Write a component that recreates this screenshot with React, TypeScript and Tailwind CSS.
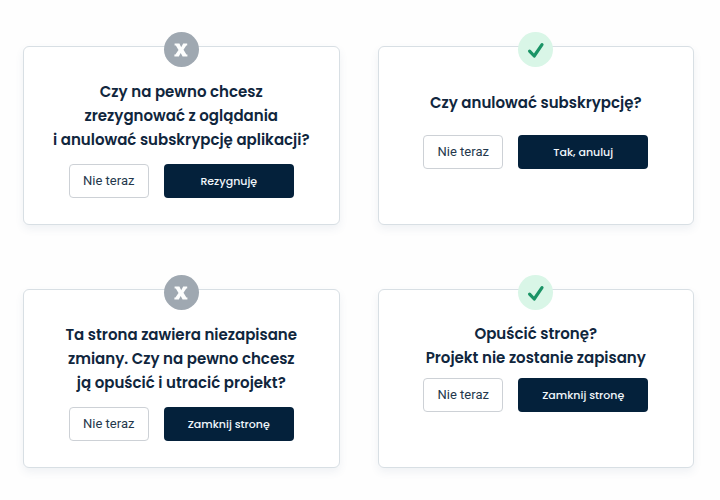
type DialogProps = {
  kind: 'dismiss' | 'confirm';
  lines: string[];
  action: string;
  spacing: string;
};

function StatusIcon({ kind }: { kind: DialogProps['kind'] }) {
  if (kind === 'dismiss') {
    return (
      <span className="flex size-[35px] items-center justify-center rounded-full bg-[#9fa8b1]">
        <svg viewBox="0 0 14 14" className="size-[14px]" fill="#fdfefe" aria-hidden="true">
          <path d="M0.6 0.5H5.4L7.2 4.2L9.2 0.5H13.2V2.6H12.3L9.5 6.8L12.4 11.4H13.4V13.5H8.6L6.7 9.9L4.8 13.5H0.4V11.4H1.4L4.5 7L1.8 2.6H0.6Z" />
        </svg>
      </span>
    );
  }
  return (
    <span className="flex size-[35px] items-center justify-center rounded-full bg-[#d9f6e7]">
      <svg viewBox="0 0 18 18" className="size-[18px]" fill="none" aria-hidden="true">
        <path d="M2.6 10.2L7.2 15L15 3.6" stroke="#1a9466" strokeWidth="3.2" strokeLinecap="round" strokeLinejoin="round" />
      </svg>
    </span>
  );
}

function DialogCard({ kind, lines, action, spacing }: DialogProps) {
  return (
    <section className="relative rounded-md border border-[#d8dfe4] bg-white shadow-[0_4px_8px_rgba(60,90,130,0.08)]">
      <div className="absolute inset-x-0 -top-[15px] flex justify-center">
        <StatusIcon kind={kind} />
      </div>
      <div className={`flex flex-col items-center ${spacing}`}>
        <h2 className="text-center text-[15px] leading-6 font-semibold whitespace-nowrap text-[#10263d]">
          {lines.map((line) => (
            <span key={line} className="block">
              {line}
            </span>
          ))}
        </h2>
        <div className="flex gap-[15px]">
          <button
            type="button"
            className="h-[34px] w-20 rounded border border-[#cdd1d6] bg-white font-['Roboto',sans-serif] text-[13px] text-[#24384c]"
          >
            Nie teraz
          </button>
          <button type="button" className="h-[34px] w-[130px] rounded bg-[#04213b] text-[11px] font-medium text-[#f1f7fb]">
            {action}
          </button>
        </div>
      </div>
    </section>
  );
}

const dialogs: DialogProps[] = [
  {
    kind: 'dismiss',
    lines: ['Czy na pewno chcesz', 'zrezygnować z oglądania', 'i anulować subskrypcję aplikacji?'],
    action: 'Rezygnuję',
    spacing: 'gap-3 pt-[33px] pb-[26px]',
  },
  {
    kind: 'confirm',
    lines: ['Czy anulować subskrypcję?'],
    action: 'Tak, anuluj',
    spacing: 'gap-5 pt-[44px] pb-6',
  },
  {
    kind: 'dismiss',
    lines: ['Ta strona zawiera niezapisane', 'zmiany. Czy na pewno chcesz', 'ją opuścić i utracić projekt?'],
    action: 'Zamknij stronę',
    spacing: 'gap-3 pt-[33px] pb-[26px]',
  },
  {
    kind: 'confirm',
    lines: ['Opuścić stronę?', 'Projekt nie zostanie zapisany'],
    action: 'Zamknij stronę',
    spacing: 'gap-2 pt-8 pb-6',
  },
];

export default function App() {
  return (
    <main className="min-h-screen bg-[#fefefe] pt-[46px] pr-[26px] pb-8 pl-[23px] font-['Poppins','Inter',sans-serif]">
      <div className="grid grid-cols-2 gap-x-[38px] gap-y-16">
        {dialogs.map((dialog) => (
          <DialogCard key={dialog.lines[0]} {...dialog} />
        ))}
      </div>
    </main>
  );
}
